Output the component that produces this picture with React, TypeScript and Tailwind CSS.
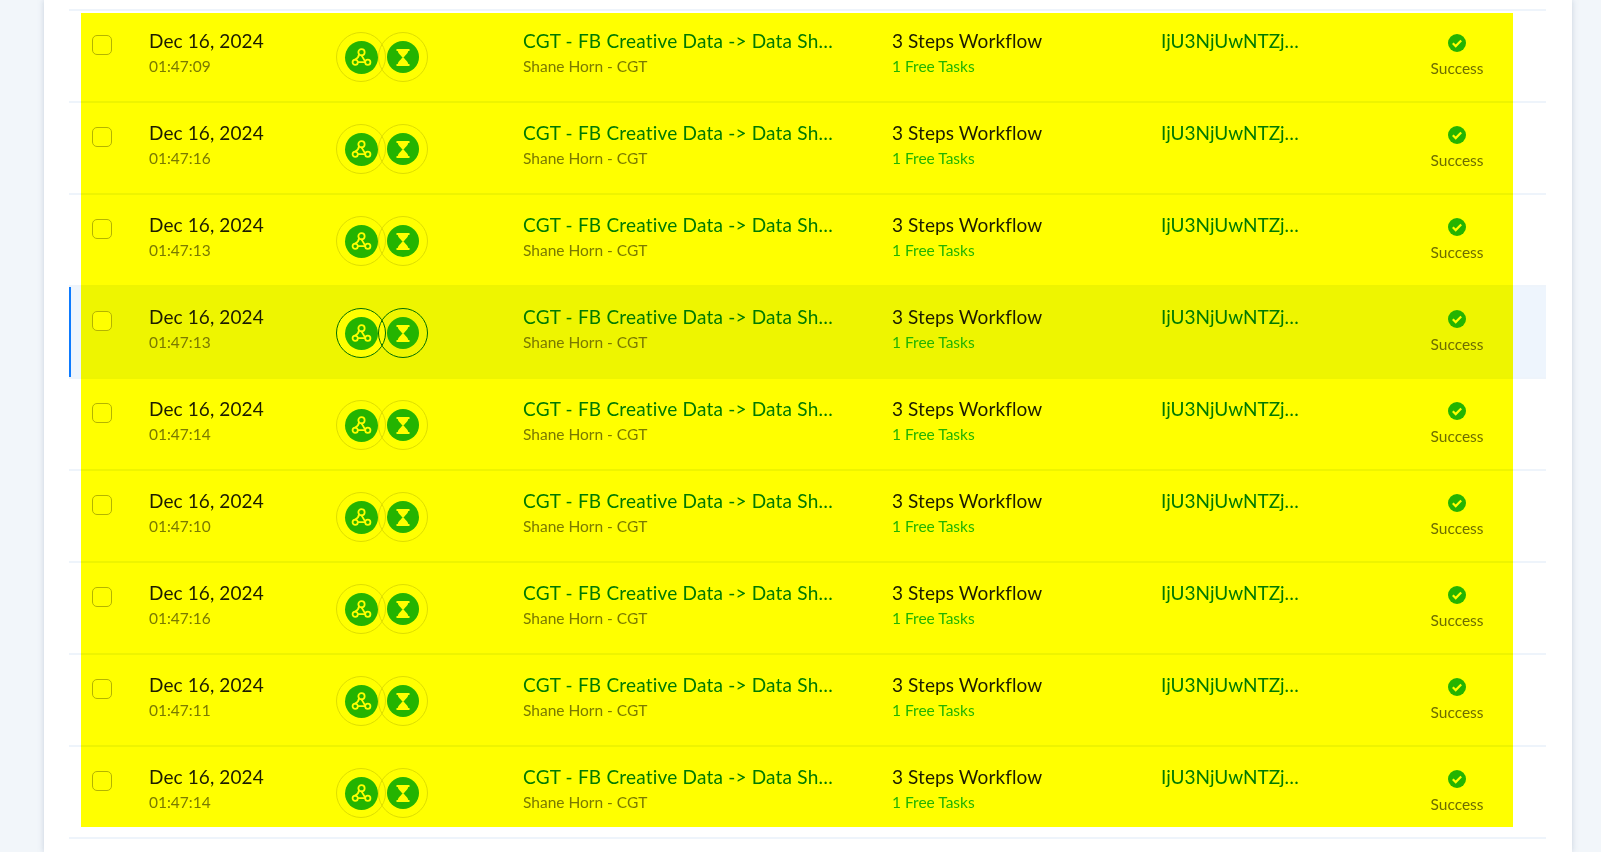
import React from "react";

const times = ["01:47:09","01:47:16","01:47:13","01:47:13","01:47:14","01:47:10","01:47:16","01:47:11","01:47:14"];

function WebhookIcon() {
  return (
    <svg viewBox="0 0 20 20" className="w-[21px] h-[21px]" fill="none" stroke="#fff" strokeWidth="1.700" strokeLinecap="round" strokeLinejoin="round">
      <circle cx="10" cy="5" r="3" />
      <circle cx="4" cy="14.500" r="2.500" />
      <circle cx="16" cy="14.500" r="2.500" />
      <path d="M7.600 7c-.2 1.800-1.200 3.800-3.600 5" />
      <path d="M10 8l3.200 5.300" />
      <path d="M6.500 14.500h7" />
    </svg>
  );
}

function Hourglass() {
  return (
    <svg viewBox="0 0 14 17" className="w-[14px] h-[17px]" fill="#fff">
      <path d="M.5 0h13v2h-1.200C11.800 4.800 8.800 6.600 7.700 8.500H6.300C5.200 6.600 2.200 4.800 1.700 2H.5z" />
      <path d="M6.300 8.500h1.400c1.100 1.900 4.100 3.700 4.600 6.500h1.200v2H.5v-2h1.200c.5-2.800 3.500-4.600 4.600-6.500z" />
    </svg>
  );
}

function Check() {
  return (
    <svg viewBox="0 0 18 18" className="w-[18px] h-[18px] block">
      <circle cx="9" cy="9" r="9" fill="#24b400" />
      <path d="M4.800 9.300l2.900 2.800 5.500-5.600" fill="none" stroke="#fff" strokeWidth="2.200" />
    </svg>
  );
}

function Row({ time, hover }: { time: string; hover: boolean }) {
  return (
    <div className={`relative flex h-[92px] border-t-2 border-[#eef4fb] ${hover ? "bg-[#eef5fd]" : "bg-white"}`}>
      {hover && <div className="absolute left-0 top-0 bottom-[-2px] w-[2px] bg-[#0d7bff]" />}
      <div className="w-[80px] pl-[23px] pt-[24px] shrink-0">
        <div className="w-[20px] h-[20px] rounded-[5px] border border-[#b4b4b4] bg-white" />
      </div>
      <div className="w-[187px] shrink-0 pt-[17px]">
        <div className="text-[19px] tracking-[0.1px] leading-[26px] text-[#1c1c1c]">Dec 16, 2024</div>
        <div className="text-[15.5px] leading-[20px] mt-[2px] text-[#7a7a7a]">{time}</div>
      </div>
      <div className="w-[187px] shrink-0 pt-[21px] flex">
        <div className={`w-[50px] h-[50px] rounded-full border flex items-center justify-center bg-white ${hover ? "border-[#006e00]" : "border-[#dedede]"}`}>
          <div className="w-[33px] h-[33px] rounded-full bg-[#24b400] flex items-center justify-center">
            <WebhookIcon />
          </div>
        </div>
        <div className={`w-[50px] h-[50px] -ml-[8px] rounded-full border flex items-center justify-center ${hover ? "border-[#006e00]" : "border-[#dedede]"}`}>
          <div className="w-[32px] h-[32px] rounded-full bg-[#24b400] flex items-center justify-center">
            <Hourglass />
          </div>
        </div>
      </div>
      <div className="w-[369px] shrink-0 pt-[17px]">
        <div className="whitespace-nowrap text-[19px] tracking-[0.2px] leading-[26px] text-[#007a00]">CGT - FB Creative Data -&gt; Data Sh…</div>
        <div className="text-[15.5px] leading-[20px] mt-[2px] text-[#7a7a7a]">Shane Horn - CGT</div>
      </div>
      <div className="w-[269px] shrink-0 pt-[17px]">
        <div className="text-[19px] tracking-[0.1px] leading-[26px] text-[#1c1c1c]">3 Steps Workflow</div>
        <div className="text-[15.5px] leading-[20px] mt-[2px] text-[#22b400]">1 Free Tasks</div>
      </div>
      <div className="w-[249px] shrink-0 pt-[17px]">
        <div className="whitespace-nowrap text-[19px] leading-[26px] text-[#007a00]">IjU3NjUwNTZj…</div>
      </div>
      <div className="w-[94px] shrink-0 pt-[23px] flex flex-col items-center">
        <Check />
        <div className="text-[15.5px] leading-[20px] mt-[6px] text-[#6e6e6e]">Success</div>
      </div>
    </div>
  );
}

export default function App() {
  return (
    <div className="relative h-[852px] overflow-hidden bg-[#f2f6fa] font-['Lato','Noto_Sans',sans-serif]">
      <div className="ml-[44px] w-[1528px] h-full bg-white pl-[25px] pt-[9px] shadow-[0_0_6px_rgba(120,140,170,0.35)]">
        <div className="w-[1477px]">
          {times.map((t, i) => (
            <Row key={i} time={t} hover={i === 3} />
          ))}
          <div className="border-t-2 border-[#eef4fb]" />
        </div>
      </div>
      <div className="absolute left-[81px] top-[13px] w-[1432px] h-[814px] bg-[#ffff00] mix-blend-multiply pointer-events-none" />
    </div>
  );
}
